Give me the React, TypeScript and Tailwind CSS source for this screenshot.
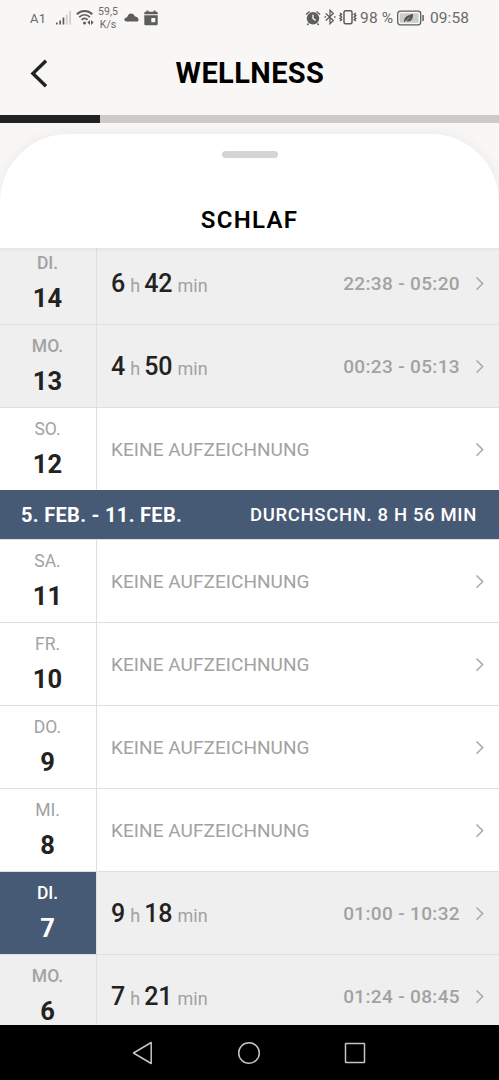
import clsx from "clsx";

type Night = {
  weekday: string;
  day: number;
  hours?: number;
  minutes?: number;
  range?: string;
  active?: boolean;
};

const currentWeek: Night[] = [
  { weekday: "DI.", day: 14, hours: 6, minutes: 42, range: "22:38 - 05:20" },
  { weekday: "MO.", day: 13, hours: 4, minutes: 50, range: "00:23 - 05:13" },
  { weekday: "SO.", day: 12 },
];

const lastWeek: Night[] = [
  { weekday: "SA.", day: 11 },
  { weekday: "FR.", day: 10 },
  { weekday: "DO.", day: 9 },
  { weekday: "MI.", day: 8 },
  { weekday: "DI.", day: 7, hours: 9, minutes: 18, range: "01:00 - 10:32", active: true },
  { weekday: "MO.", day: 6, hours: 7, minutes: 21, range: "01:24 - 08:45" },
];

function StatusBar() {
  return (
    <div className="flex h-[36px] items-center whitespace-nowrap pl-[30px] pr-[29px] font-[Roboto,sans-serif] text-[#6a6a68]">
      <span className="w-[25px] text-[13px] leading-none tracking-[0.2px]">A1</span>

      {/* Signal */}
      <svg className="-mt-px mr-[4px] shrink-0" width="17" height="16" viewBox="0 0 17 16">
        <g fill="#5d5d5b">
          <rect x="1" y="12.5" width="1.7" height="2" />
          <rect x="4.3" y="10.5" width="1.7" height="4" />
          <rect x="7.6" y="7.5" width="1.7" height="7" />
        </g>
        <g fill="#cdcdca">
          <rect x="10.9" y="4.5" width="1.7" height="10" />
          <rect x="14.2" y="1" width="1.7" height="13.5" />
        </g>
      </svg>

      {/* Wifi */}
      <svg className="-mt-px mr-[4px] shrink-0" width="18" height="17" viewBox="0 0 18 17" fill="none" stroke="#5d5d5b" strokeWidth="1.9">
        <path d="M.8 5.2C5.4.9 11.7.9 16.3 5.2" />
        <path d="M3.2 8.1c3.1-3 7.5-3 10.7 0" />
        <path d="M5.6 10.8c1.7-1.7 4.2-1.7 5.9 0" />
        <circle cx="8.5" cy="14" r="1.5" fill="#5d5d5b" stroke="none" />
        <path d="M14 11v5l-2.6-2.5zM15 11v5l2.6-2.5z" fill="#5d5d5b" stroke="none" />
      </svg>

      <span className="w-[20px] pt-px text-center text-[10.5px] leading-[12.5px]">
        59,5
        <br />
        K/s
      </span>

      {/* Cloud */}
      <svg className="-mt-[3px] ml-[6px] shrink-0" width="15" height="10" viewBox="0 0 15 10" fill="#5d5d5b">
        <path d="M2.5 9.5Q.3 9.5.3 7.6q0-1.9 2.8-2.3C3.8 3 5.2 1.6 7 1.6c1.8 0 3.1 1 3.7 2.7 2.3.3 3.8 1.7 3.8 3.6 0 1.1-.8 1.6-1.8 1.6z" />
      </svg>

      {/* Calendar */}
      <svg className="-mt-px ml-[5px] shrink-0" width="14" height="16" viewBox="0 0 14 16" fill="#5d5d5b">
        <path d="M2.5.5h2v1.2h5V.5h2v1.2h1q1.2 0 1.2 1.2v1.3H.3V2.9q0-1.2 1.2-1.2h1z" />
        <path fillRule="evenodd" d="M.3 5.2h13.4v8.7q0 1.3-1.3 1.3H1.6Q.3 15.2.3 13.9zM7.3 8v4.3h4V8z" />
      </svg>

      {/* Alarm */}
      <svg className="-mt-px ml-auto shrink-0" width="16" height="16" viewBox="0 0 16 16">
        <circle cx="8" cy="8.3" r="6.2" fill="#5d5d5b" />
        <path d="M1 4.5 4.5 1.5M15 4.5l-3.5-3M3.5 13.5l-1.2 1.5M12.5 13.5l1.2 1.5" stroke="#5d5d5b" strokeWidth="1.4" />
        <path d="M8 4.7v3.8l2.7 1.8" fill="none" stroke="#f8f7f5" strokeWidth="1.4" />
      </svg>

      {/* Bluetooth */}
      <svg className="-mt-[2px] ml-[3px] shrink-0" width="12" height="16" viewBox="0 0 12 16" fill="none" stroke="#5d5d5b" strokeWidth="1.3">
        <path d="m1.8 4.5 7.5 7L6 14.7V1.3l3.3 3.2-7.5 7" />
        <path d="M.5 8H2M10 8h1.5" strokeWidth="1.6" />
      </svg>

      {/* Vibrate */}
      <svg className="-mt-[2px] ml-[3px] shrink-0" width="18" height="16" viewBox="0 0 18 16" fill="none" stroke="#5d5d5b">
        <rect x="5" y="1.7" width="8" height="13" rx="1.5" strokeWidth="1.5" />
        <path d="m1 4 1.5 1.3L1 6.6 2.5 8 1 9.4l1.5 1.3L1 12M16.8 4l-1.5 1.3 1.5 1.3L15.3 8l1.5 1.4-1.5 1.3 1.5 1.3" strokeWidth="1.5" />
      </svg>

      <span className="ml-[3px] w-[37px] pt-[2px] text-[15.5px] leading-none tracking-[0.2px]">98 %</span>

      {/* Battery */}
      <svg className="-mt-px shrink-0" width="28" height="16" viewBox="0 0 28 16">
        <rect x=".7" y="1.2" width="23" height="13.6" rx="2.5" fill="none" stroke="#5d5d5b" strokeWidth="1.3" />
        <rect x="2.8" y="3.3" width="18.8" height="9.4" fill="#cbcbc8" />
        <path d="M7.2 12.5c-.8-4.5 2.1-7.3 8.8-8.5.3 4.3-1.3 7.5-5 7.5-1 0-1.7-.2-2-.5z" fill="#555553" />
        <path d="m7.5 12.2 5-4.5" stroke="#cbcbc8" strokeWidth=".7" />
        <rect x="25.3" y="5" width="1.5" height="6" fill="#5d5d5b" />
      </svg>
      <span className="ml-[5px] w-[40px] pt-[2px] text-[15.5px] leading-none tracking-[0.1px]">09:58</span>
    </div>
  );
}

function Header() {
  return (
    <div className="flex h-[79px] items-start pt-[23px]">
      <svg className="ml-[29px]" width="20" height="30" viewBox="0 0 20 30" fill="none" stroke="#222" strokeWidth="3.4">
        <path d="M17 1.7 3.9 14.5 17 27.3" />
      </svg>
      <h1 className="mr-[49px] flex-1 pl-px text-center text-[29px] font-bold leading-[29px] tracking-[0.4px] text-black">
        WELLNESS
      </h1>
    </div>
  );
}

function DayRow({ night }: { night: Night }) {
  const recorded = night.hours !== undefined;

  return (
    <div className={clsx("flex h-[83px] border-t border-[#dfdfdf]", recorded ? "bg-[#efefef]" : "bg-white")}>
      <div
        className={clsx(
          "flex w-[97px] shrink-0 flex-col items-center border-r border-[#dfdfdf] pr-px pt-[11px]",
          night.active ? "bg-[#475a75] bg-clip-padding text-white" : "text-[#222]"
        )}
      >
        <span
          className={clsx(
            "text-[17.5px] leading-[20px]",
            recorded ? "font-medium" : "font-normal",
            !night.active && "text-[#a2a2a2]"
          )}
        >
          {night.weekday}
        </span>
        <span className="mt-[12px] text-[25.5px] font-bold leading-[26px]">{night.day}</span>
      </div>

      <div className="flex flex-1 items-center pl-[14px] pr-[14px] pt-[2px]">
        {recorded ? (
          <>
            <div className="flex items-baseline pt-[2px] text-[18px] leading-[30px] text-[#a2a2a2]">
              <span className="text-[25px] font-medium text-[#222]">{night.hours}</span>
              <span className="ml-[5px]">h</span>
              <span className="ml-[4px] text-[25px] font-medium text-[#222]">{night.minutes}</span>
              <span className="ml-[5px]">min</span>
            </div>
            <span className="ml-auto mr-[15px] text-[19px] font-medium tracking-[0.35px] text-[#a2a2a2]">
              {night.range}
            </span>
          </>
        ) : (
          <span className="mr-auto text-[19px] tracking-[0.05px] text-[#a2a2a2]">KEINE AUFZEICHNUNG</span>
        )}
        <svg width="10" height="14" viewBox="0 0 10 14" fill="none" stroke="#aaa" strokeWidth="1.5">
          <path d="M1.5.5 7.7 6.6 1.5 12.7" />
        </svg>
      </div>
    </div>
  );
}

function WeekBanner() {
  return (
    <div className="flex h-[49px] items-center justify-between bg-[#475a75] pl-[21px] pr-[22px] text-white">
      <span className="text-[20px] font-bold tracking-[0.32px]">5. FEB. - 11. FEB.</span>
      <span className="pt-[2px] text-[18.5px] font-medium tracking-[0.65px]">DURCHSCHN. 8 H 56 MIN</span>
    </div>
  );
}

function NavBar() {
  return (
    <div className="flex h-[55px] items-center justify-between bg-black pl-[131px] pr-[133px]">
      <svg width="22" height="24" viewBox="0 0 22 24" fill="none" stroke="#c4c4c4" strokeWidth="1.5" strokeLinejoin="round">
        <path d="M20.2 1.5v21L2.5 12z" />
      </svg>
      <svg width="24" height="24" viewBox="0 0 24 24" fill="none" stroke="#c4c4c4" strokeWidth="1.5">
        <circle cx="12" cy="12" r="10.3" />
      </svg>
      <svg width="22" height="22" viewBox="0 0 22 22" fill="none" stroke="#c4c4c4" strokeWidth="1.5">
        <rect x="1.5" y="1.5" width="19" height="19" rx=".5" />
      </svg>
    </div>
  );
}

function App() {
  return (
    <div className="flex h-[1080px] w-[499px] flex-col overflow-hidden bg-[#f8f7f5] font-[Roboto,sans-serif]">
      <StatusBar />
      <Header />

      {/* Progress */}
      <div className="h-[8px] shrink-0 bg-[#cccbc9]">
        <div className="h-full w-[100px] bg-[#222]" />
      </div>

      {/* Sheet */}
      <div className="mt-[11px] flex h-[114px] shrink-0 flex-col items-center rounded-t-[68px] bg-white pt-[17px] shadow-[0_0_14px_rgba(0,0,0,0.06)]">
        <div className="h-[7px] w-[56px] rounded-full bg-[#d5d5d5]" />
        <h2 className="mt-[48px] text-[24px] font-semibold leading-[28px] tracking-[1.3px] text-black">SCHLAF</h2>
      </div>

      {/* Nights */}
      <div className="relative min-h-0 flex-1 overflow-hidden">
        <div className="-mt-[7px]">
          {currentWeek.map((night) => (
            <DayRow key={night.day} night={night} />
          ))}
          <WeekBanner />
          {lastWeek.map((night) => (
            <DayRow key={night.day} night={night} />
          ))}
        </div>
        <div className="absolute inset-x-0 top-0 h-[4px] bg-linear-to-b from-black/5 to-transparent" />
      </div>

      <NavBar />
    </div>
  );
}

export default App;
